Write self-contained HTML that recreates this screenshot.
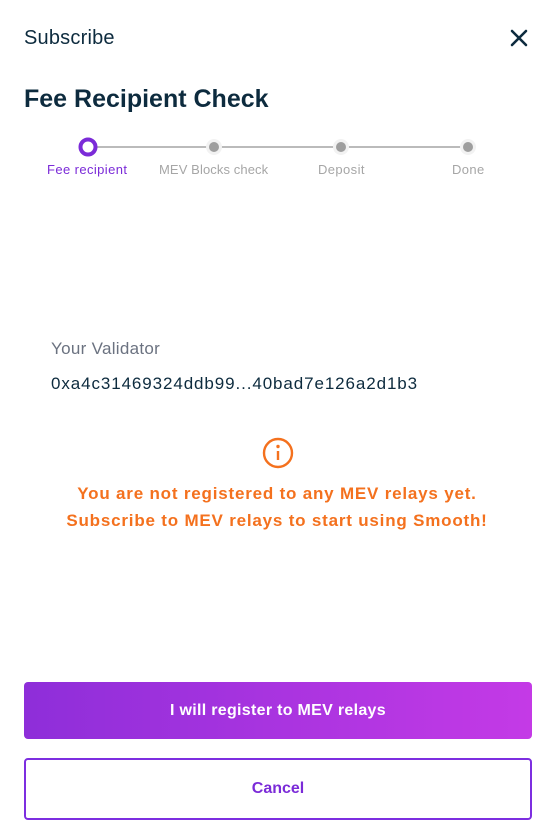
<!DOCTYPE html>
<html><head><style>
body{margin:0;width:554px;height:831px;background:#fff;font-family:"Liberation Sans",sans-serif;position:relative;overflow:hidden}
.a{position:absolute;white-space:nowrap}
</style></head><body>
<div class="a" style="left:24px;top:27px;font-size:20px;color:#0d2b3e;letter-spacing:0.2px">Subscribe</div>
<svg class="a" style="left:510px;top:29px" width="18" height="18" viewBox="0 0 18 18"><path d="M2 2L16 16M16 2L2 16" stroke="#0d2b3e" stroke-width="2.6" stroke-linecap="round"/></svg>
<div class="a" style="left:24px;top:85px;font-size:25px;font-weight:bold;color:#0d2b3e">Fee Recipient Check</div>
<svg class="a" style="left:0;top:130px" width="554" height="40">
<line x1="96" y1="17" x2="468" y2="17" stroke="#bbb" stroke-width="2"/>
<circle cx="214" cy="17" r="8" fill="#f2f2f2"/><circle cx="214" cy="17" r="5" fill="#9e9e9e"/>
<circle cx="341" cy="17" r="8" fill="#f2f2f2"/><circle cx="341" cy="17" r="5" fill="#9e9e9e"/>
<circle cx="468" cy="17" r="8" fill="#f2f2f2"/><circle cx="468" cy="17" r="5" fill="#9e9e9e"/>
<circle cx="88" cy="17" r="7.5" fill="#fff" stroke="#7b2bd8" stroke-width="4"/>
</svg>
<div class="a" style="left:47px;top:162px;font-size:13px;color:#7b2bd8;letter-spacing:0.4px">Fee recipient</div>
<div class="a" style="left:159px;top:162px;font-size:13px;color:#a6a6a6;letter-spacing:0.1px">MEV Blocks check</div>
<div class="a" style="left:318px;top:162px;font-size:13px;color:#a6a6a6;letter-spacing:0.4px">Deposit</div>
<div class="a" style="left:452px;top:162px;font-size:13px;color:#a6a6a6;letter-spacing:0.4px">Done</div>
<div class="a" style="left:51px;top:339px;font-size:17px;color:#6b7280;letter-spacing:0.3px">Your Validator</div>
<div class="a" style="left:51px;top:374px;font-size:17px;color:#0d2b3e;letter-spacing:0.9px">0xa4c31469324ddb99...40bad7e126a2d1b3</div>
<svg class="a" style="left:262px;top:437px" width="32" height="32" viewBox="0 0 32 32"><circle cx="16" cy="16" r="14" fill="none" stroke="#f4711e" stroke-width="2.4"/><circle cx="16" cy="9.5" r="1.7" fill="#f4711e"/><line x1="16" y1="14" x2="16" y2="23" stroke="#f4711e" stroke-width="2.4"/></svg>
<div class="a" style="left:0;width:554px;text-align:center;top:480px;font-size:17px;font-weight:bold;color:#f4711e;line-height:27px;letter-spacing:0.8px">You are not registered to any MEV relays yet.<br>Subscribe to MEV relays to start using Smooth!</div>
<div class="a" style="left:24px;top:682px;width:508px;height:57px;border-radius:4px;background:linear-gradient(90deg,#8e2ed9,#c43ae6);color:#fff;font-size:16px;font-weight:bold;text-align:center;line-height:57px;letter-spacing:0.3px">I will register to MEV relays</div>
<div class="a" style="left:24px;top:758px;width:504px;height:58px;border:2px solid #7d2ee0;border-radius:4px;color:#7b2bd8;font-size:16px;font-weight:bold;text-align:center;line-height:58px">Cancel</div>
</body></html>
